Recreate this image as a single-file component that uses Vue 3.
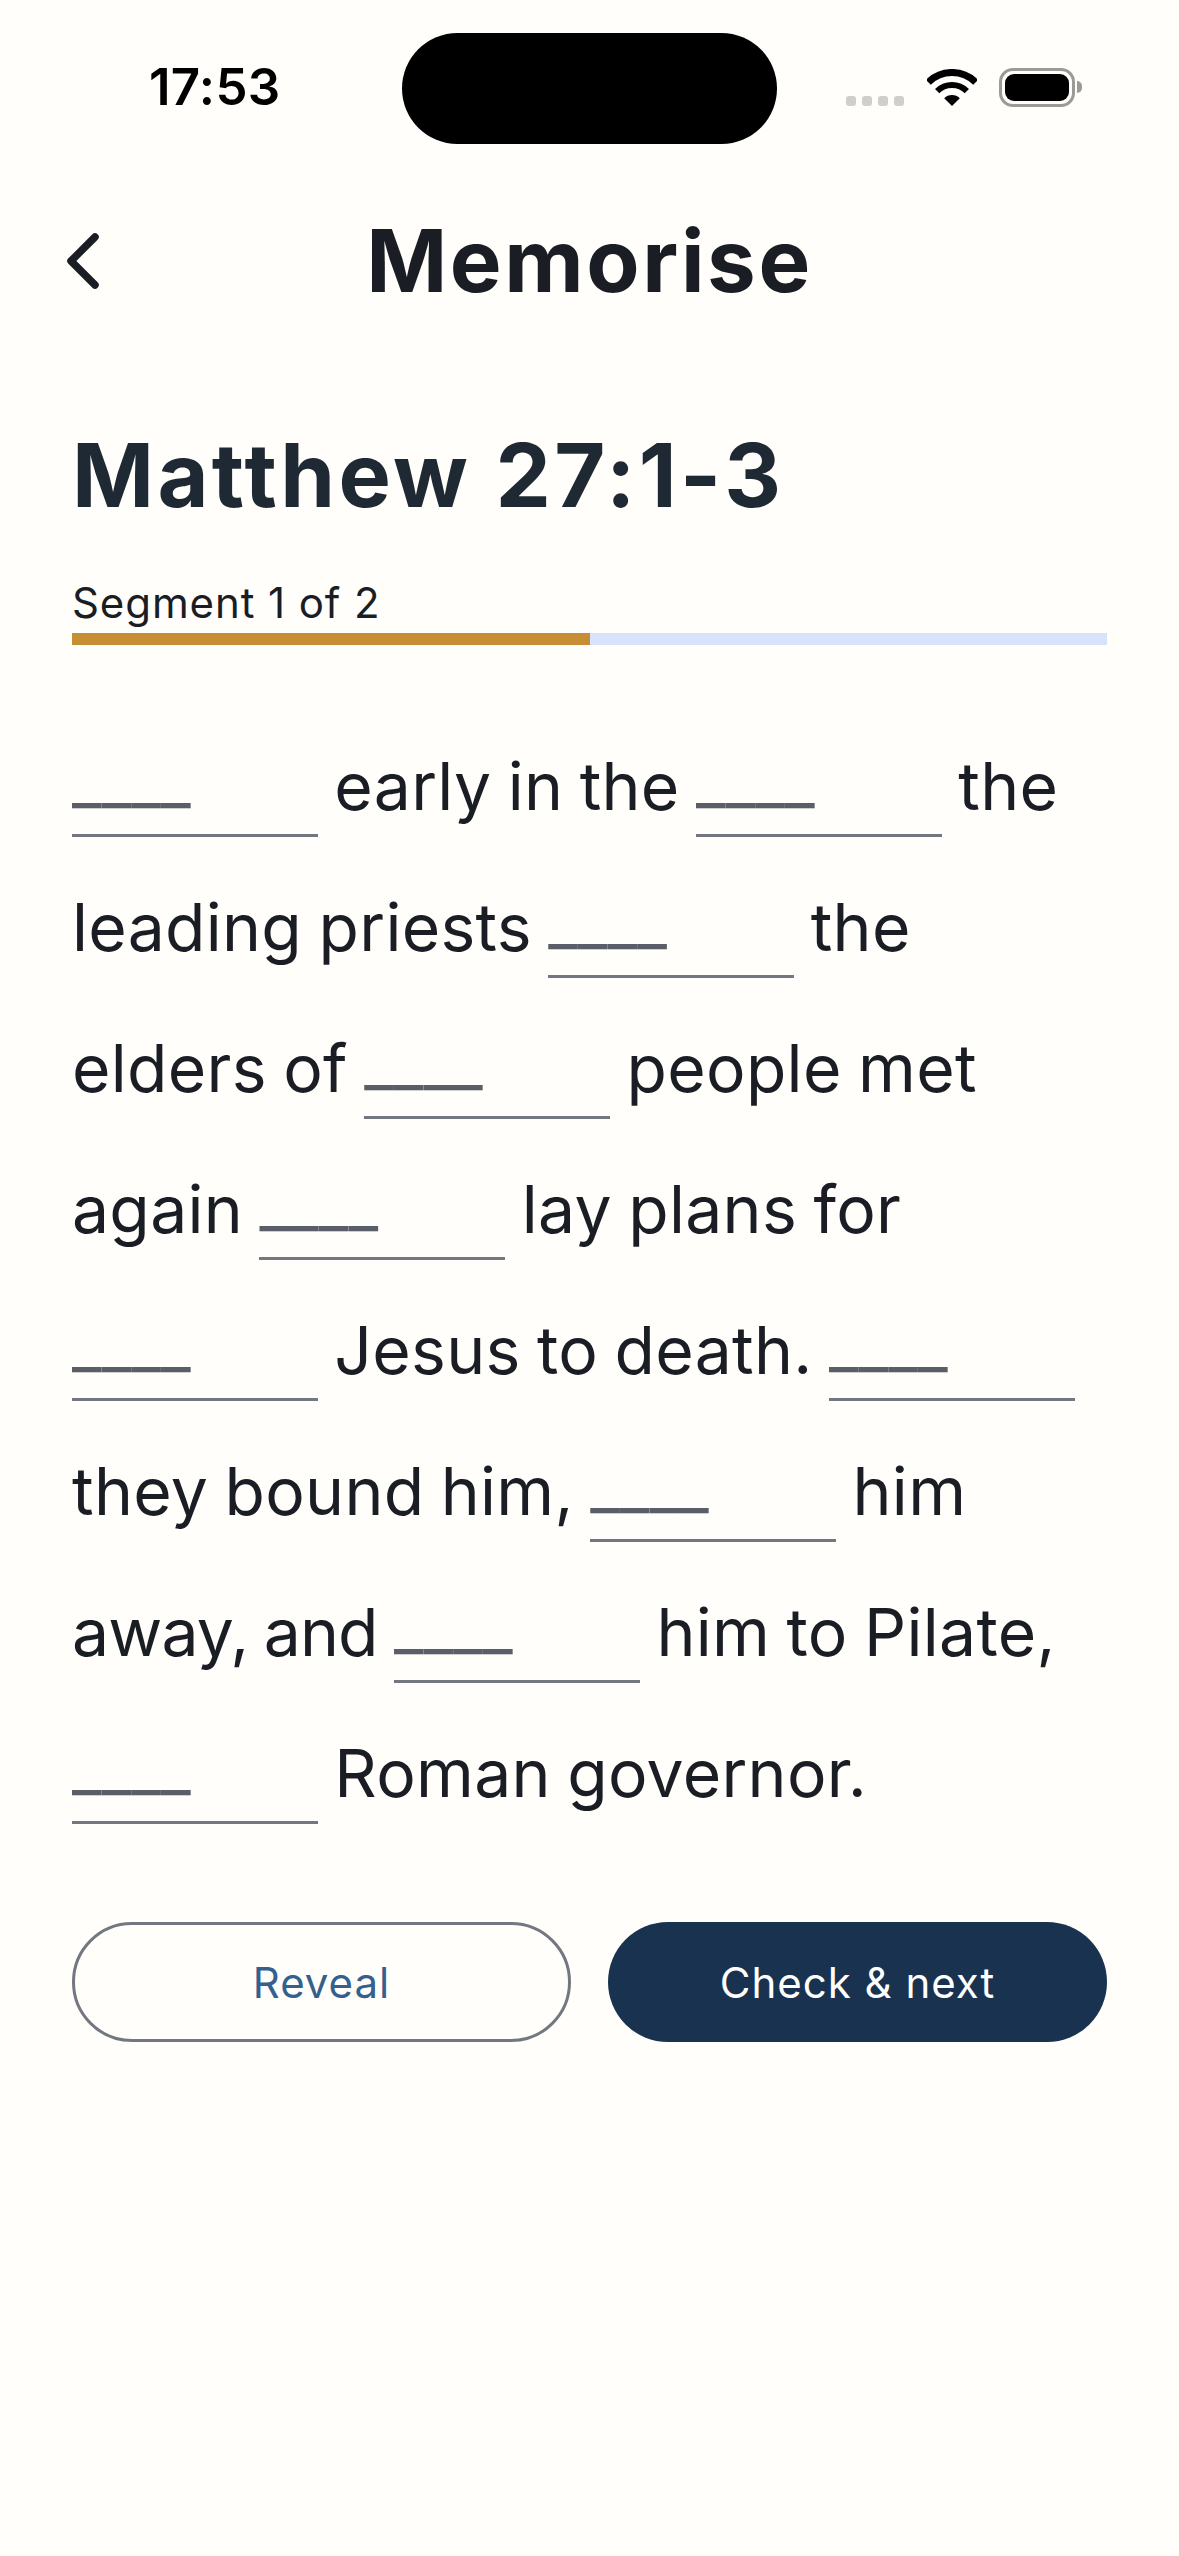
<script setup>
const lines = [
  ['b', ' early in the ', 'b', ' the '],
  ['leading priests ', 'b', ' the '],
  ['elders of ', 'b', ' people met '],
  ['again ', 'b', ' lay plans for '],
  ['b', ' Jesus to death. ', 'b', ' '],
  ['they bound him, ', 'b', ' him '],
  ['t', ' ', 'b', ' him to Pilate, '],
  ['b', ' Roman governor.']
]
const parts = lines.flat()
</script>

<template>
  <div class="page">
    <div class="status">
      <span class="time">17:53</span>
      <div class="island"></div>
      <div class="dots"><i></i><i></i><i></i><i></i></div>
      <svg class="wifi" width="50" height="37" viewBox="0 0 50 37" fill="none" stroke="#000">
        <path d="M1.3 13.3A33.5 33.5 0 0 1 48.7 13.3" stroke-width="7" />
        <path d="M10.15 22.15A21 21 0 0 1 39.85 22.15" stroke-width="6" />
        <path d="M25 37L17.2 29.2A11 11 0 0 1 32.8 29.2Z" fill="#000" stroke="none" />
      </svg>
      <div class="battery"><div class="charge"></div></div>
      <div class="cap"></div>
    </div>

    <header class="nav">
      <svg class="back" width="38" height="62" viewBox="0 0 38 62" fill="none">
        <path d="M31 6L7 30L31 54" stroke="#1a1e24" stroke-width="7.5" stroke-linecap="round" stroke-linejoin="round" />
      </svg>
      <h1 class="title">Memorise</h1>
    </header>

    <main class="content">
      <h2 class="ref">Matthew 27:1-3</h2>
      <div class="seg">Segment 1 of 2</div>
      <div class="bar"><div class="fill"></div><div class="rest"></div></div>
      <p class="verse">
        <template v-for="(p, i) in parts" :key="i">
          <span v-if="p === 'b'" class="blank"><span class="ph">____</span></span>
          <span v-else-if="p === 't'" class="tight">away, and</span>
          <template v-else>{{ p }}</template>
        </template>
      </p>
      <div class="actions">
        <button class="btn reveal">Reveal</button>
        <button class="btn next">Check &amp; next</button>
      </div>
    </main>
  </div>
</template>

<style scoped>
.page {
  min-height: 2556px;
  background: #fffefa;
  font-family: Inter, "Liberation Sans", sans-serif;
  color: #1a1e24;
  box-sizing: border-box;
}
.status {
  display: flex;
  align-items: flex-start;
  height: 144px;
  padding-top: 33px;
  box-sizing: border-box;
}
.time {
  width: 128px;
  margin-left: 149px;
  margin-top: 30px;
  font-size: 51px;
  line-height: 48px;
  font-weight: 600;
  letter-spacing: 0.3px;
  color: #000;
  white-space: nowrap;
}
.island {
  width: 375px;
  height: 111px;
  margin-left: 125px;
  border-radius: 56px;
  background: #000;
}
.dots {
  display: flex;
  gap: 6px;
  margin-left: 69px;
  margin-top: 63px;
}
.dots i {
  display: block;
  width: 10px;
  height: 10px;
  border-radius: 3px;
  background: #cfcfcc;
}
.wifi {
  margin-left: 23px;
  margin-top: 36px;
}
.battery {
  width: 76px;
  height: 39px;
  margin-left: 22px;
  margin-top: 35px;
  padding: 3px;
  box-sizing: border-box;
  border: 3px solid #9b9a97;
  border-radius: 14px;
  background: #fffefa;
}
.charge {
  width: 100%;
  height: 100%;
  border-radius: 9px;
  background: #000;
}
.cap {
  width: 5px;
  height: 12px;
  margin-left: 2px;
  margin-top: 48px;
  border-radius: 0 6px 6px 0;
  background: #9b9a97;
}
.nav {
  position: relative;
  display: flex;
  justify-content: center;
  align-items: center;
  height: 116px;
  margin-top: 59px;
}
.back {
  position: absolute;
  left: 64px;
  top: 28px;
}
.title {
  margin: 0;
  font-size: 87px;
  line-height: 116px;
  font-weight: 700;
  letter-spacing: 2.6px;
  color: #1a1e24;
}
.content {
  padding: 0 72px;
}
.ref {
  margin: 103px 0 0;
  font-size: 88px;
  line-height: 106px;
  font-weight: 700;
  letter-spacing: 3.4px;
  color: #1f2933;
}
.seg {
  margin-top: 50px;
  font-size: 42px;
  line-height: 50px;
  letter-spacing: 0.9px;
  font-weight: 400;
}
.bar {
  display: flex;
  height: 12px;
  margin-top: 5px;
}
.fill {
  width: 518px;
  background: #c68f35;
}
.rest {
  flex: 1;
  background: #d6e3f8;
}
.verse {
  margin: 71px 0 0;
  font-size: 66px;
  line-height: 141px;
  font-weight: 400;
  letter-spacing: 0.3px;
  word-spacing: -2.5px;
  color: #1a1e24;
}
.tight {
  letter-spacing: -0.8px;
}
.blank {
  display: inline-block;
  position: relative;
  width: 246px;
  height: 60px;
  vertical-align: -27px;
  border-bottom: 3px solid #737780;
  line-height: 1;
}
.ph {
  position: absolute;
  left: 0;
  top: -23px;
  font-size: 65px;
  line-height: 58px;
  letter-spacing: 0;
  color: #5a5e66;
}
.actions {
  display: grid;
  grid-template-columns: 1fr 1fr;
  gap: 37px;
  margin-top: 78px;
}
.btn {
  height: 120px;
  padding: 0;
  border-radius: 60px;
  font-family: inherit;
  font-size: 42px;
  font-weight: 400;
  letter-spacing: 1px;
  box-sizing: border-box;
}
.reveal {
  background: transparent;
  border: 3px solid #737780;
  color: #34608f;
}
.next {
  background: #18324f;
  border: 0;
  color: #fff;
}
</style>

<style>
html, body {
  margin: 0;
  background: #fffefa;
}
</style>
